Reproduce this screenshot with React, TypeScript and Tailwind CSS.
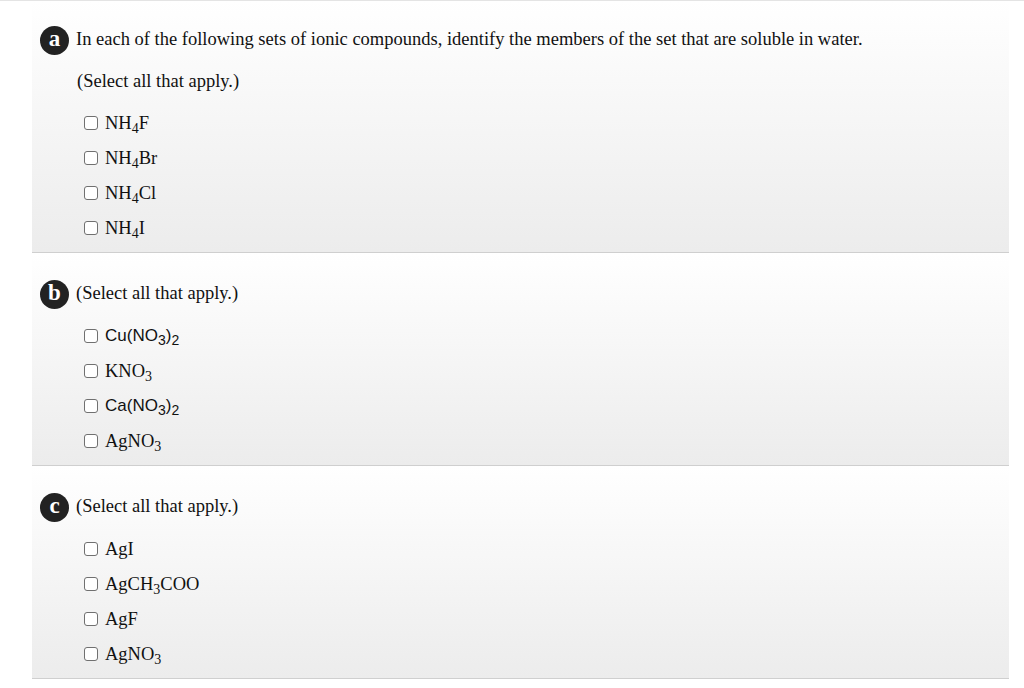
import React from "react";

const serif = { fontFamily: '"Liberation Serif", "Times New Roman", serif' };

function Sub({ children }: { children: React.ReactNode }) {
  return <sub className="text-[14px] relative top-[4px] align-baseline leading-none">{children}</sub>;
}

function Badge({ letter }: { letter: string }) {
  return (
    <div className="w-[29px] h-[29px] rounded-full bg-[#222] text-white flex items-center justify-center text-[23px] font-bold leading-none pb-[3px] shrink-0">
      {letter}
    </div>
  );
}

function Item({ children, sans }: { children: React.ReactNode; sans?: boolean }) {
  return (
    <div className="flex items-center h-[22px] pl-[52px]">
      <div className="w-[14px] h-[14px] border border-[#707070] rounded-[3px] bg-white shrink-0" />
      <span
        className={`ml-[7px] ${sans ? "text-[17px]" : "text-[18.5px]"} text-[#111] leading-[22px]`}
        style={sans ? { fontFamily: '"Liberation Sans", Arial, sans-serif' } : undefined}
      >
        {children}
      </span>
    </div>
  );
}

function Panel({ children, pt }: { children: React.ReactNode; pt: string }) {
  return (
    <div className={`ml-[32px] w-[977px] bg-gradient-to-b from-white to-[#ececec] border-b border-[#cfcfcf] ${pt} pb-[13px]`}>
      {children}
    </div>
  );
}

export default function App() {
  return (
    <div className="w-[1024px] h-[688px] bg-white text-[#111]" style={serif}>
      <div className="h-[1px] bg-[#e4e4e4]" />
      <Panel pt="pt-[25px]">
        <div className="flex items-center gap-[7px] pl-[8px] h-[28px]">
          <Badge letter="a" />
          <span className="text-[18.5px]">
            In each of the following sets of ionic compounds, identify the members of the set that are soluble in water.
          </span>
        </div>
        <div className="pl-[45px] mt-[17px] h-[22px] flex items-center text-[18.5px]">(Select all that apply.)</div>
        <div className="mt-[19px] flex flex-col gap-[13px]">
          <Item>NH<Sub>4</Sub>F</Item>
          <Item>NH<Sub>4</Sub>Br</Item>
          <Item>NH<Sub>4</Sub>Cl</Item>
          <Item>NH<Sub>4</Sub>I</Item>
        </div>
      </Panel>
      <Panel pt="pt-[27px]">
        <div className="flex items-center gap-[7px] pl-[8px] h-[28px]">
          <Badge letter="b" />
          <span className="text-[18.5px]">(Select all that apply.)</span>
        </div>
        <div className="mt-[17px] flex flex-col gap-[13px]">
          <Item sans>Cu(NO<Sub>3</Sub>)<Sub>2</Sub></Item>
          <Item>KNO<Sub>3</Sub></Item>
          <Item sans>Ca(NO<Sub>3</Sub>)<Sub>2</Sub></Item>
          <Item>AgNO<Sub>3</Sub></Item>
        </div>
      </Panel>
      <Panel pt="pt-[27px]">
        <div className="flex items-center gap-[7px] pl-[8px] h-[28px]">
          <Badge letter="c" />
          <span className="text-[18.5px]">(Select all that apply.)</span>
        </div>
        <div className="mt-[17px] flex flex-col gap-[13px]">
          <Item>AgI</Item>
          <Item>AgCH<Sub>3</Sub>COO</Item>
          <Item>AgF</Item>
          <Item>AgNO<Sub>3</Sub></Item>
        </div>
      </Panel>
    </div>
  );
}
